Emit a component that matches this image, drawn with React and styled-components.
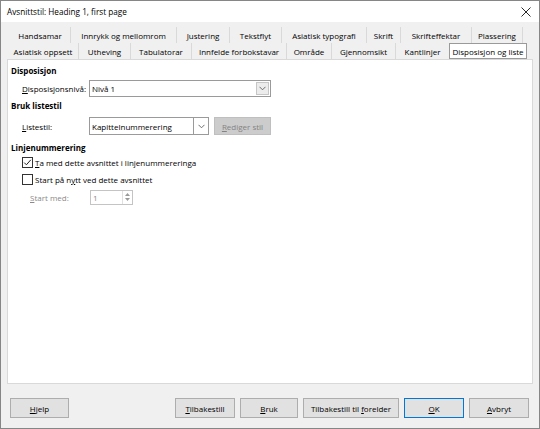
import React from 'react';
import styled, { createGlobalStyle } from 'styled-components';

const Global = createGlobalStyle`
  html, body { margin: 0; padding: 0; background: #ffffff; }
  body { font-family: "Open Sans", "Noto Sans", sans-serif; font-size: 8px; color: #000; }
  * { box-sizing: border-box; }
`;

const Window = styled.div`
  width: 540px;
  height: 429px;
  border: 1px solid #868686;
  background: #f0f0f0;
  display: flex;
  flex-direction: column;
  overflow: hidden;
`;

const TitleBar = styled.div`
  height: 21px;
  background: #ffffff;
  display: flex;
  align-items: center;
  justify-content: space-between;
  padding: 0 8px 0 6px;
  font-size: 8.2px;
`;

const Body = styled.div`
  flex: 1;
  display: flex;
  flex-direction: column;
  padding: 5px 6px 0 6px;
`;

const TabRow = styled.div`
  display: flex;
  height: 16px;
  margin-left: ${p => p.$indent}px;
`;

const Tab = styled.div`
  width: ${p => p.$w}px;
  height: 16px;
  display: flex;
  align-items: center;
  justify-content: center;
  white-space: nowrap;
  background: ${p => (p.$active ? '#ffffff' : 'transparent')};
  border: ${p => (p.$active ? '1px solid #9a9a9a' : 'none')};
  border-right: ${p => (p.$active ? '1px solid #9a9a9a' : p.$sep ? '1px solid #d9d9d9' : 'none')};
`;

const Panel = styled.div`
  height: 325px;
  background: #ffffff;
  border: 1px solid #d9d9d9;
  padding: 5px 3px 0 3px;
  display: flex;
  flex-direction: column;
`;

const Heading = styled.div`
  font-weight: 700;
  height: 12px;
  line-height: 12px;
  margin-top: ${p => p.$mt || 0}px;
`;

const FieldRow = styled.div`
  display: flex;
  align-items: center;
  height: ${p => p.$h}px;
  margin-top: ${p => p.$mt}px;
  margin-left: ${p => p.$ml || 11}px;
`;

const Label = styled.div`
  width: ${p => p.$w}px;
  color: ${p => (p.$disabled ? '#8a8a8a' : '#000')};
  white-space: nowrap;
`;

const U = styled.span`
  text-decoration: underline;
  text-underline-offset: 1px;
`;

const ComboBox = styled.div`
  width: ${p => p.$w}px;
  height: ${p => p.$h}px;
  border: 1px solid #9a9a9a;
  background: #ffffff;
  display: flex;
  align-items: stretch;
`;

const ComboText = styled.div`
  flex: 1;
  display: flex;
  align-items: center;
  padding-left: 2px;
`;

const InnerDrop = styled.div`
  width: 13px;
  margin: 1px;
  background: #ececec;
  border: 1px solid #c6c6c6;
  display: flex;
  align-items: center;
  justify-content: center;
`;

const SplitCombo = styled.div`
  display: flex;
  height: ${p => p.$h}px;
`;

const SplitText = styled.div`
  width: ${p => p.$w}px;
  border: 1px solid #9a9a9a;
  background: #ffffff;
  display: flex;
  align-items: center;
  padding-left: 2px;
`;

const SplitDrop = styled.div`
  width: 15px;
  border: 1px solid #9a9a9a;
  border-left: none;
  background: #ffffff;
  display: flex;
  align-items: center;
  justify-content: center;
`;

const DisabledButton = styled.div`
  width: 57px;
  height: 18px;
  margin-left: 5px;
  background: #cccccc;
  border: 1px solid #bfbfbf;
  color: #838383;
  display: flex;
  align-items: center;
  justify-content: center;
`;

const CheckRow = styled.div`
  display: flex;
  align-items: center;
  height: 12px;
  margin-top: ${p => p.$mt}px;
  margin-left: 11px;
`;

const CheckBox = styled.div`
  width: 11px;
  height: 11px;
  border: 1px solid #333333;
  background: #ffffff;
  display: flex;
  align-items: center;
  justify-content: center;
  margin-right: 2px;
`;

const SpinBox = styled.div`
  width: 43px;
  height: 15px;
  border: 1px solid #c4c4c4;
  background: #ffffff;
  display: flex;
  color: #8a8a8a;
`;

const SpinText = styled.div`
  flex: 1;
  display: flex;
  align-items: center;
  padding-left: 2px;
`;

const SpinArrows = styled.div`
  width: 10px;
  border-left: 1px solid #e0e0e0;
  display: flex;
  flex-direction: column;
  align-items: center;
  justify-content: space-evenly;
`;

const Footer = styled.div`
  display: flex;
  justify-content: space-between;
  margin-top: 14px;
  padding: 0 4px 0 3px;
`;

const ButtonGroup = styled.div`
  display: flex;
  gap: 5px;
`;

const Button = styled.div`
  width: ${p => p.$w}px;
  height: 20px;
  background: #e1e1e1;
  border: 1px solid ${p => (p.$default ? '#0078d7' : '#adadad')};
  display: flex;
  align-items: center;
  justify-content: center;
  white-space: nowrap;
`;

const Chevron = () => (
  <svg width="7" height="5" viewBox="0 0 7 5">
    <polyline points="0.5,0.8 3.5,3.8 6.5,0.8" fill="none" stroke="#606060" strokeWidth="0.9" />
  </svg>
);

const CloseIcon = () => (
  <svg width="10" height="10" viewBox="0 0 10 10">
    <line x1="0.5" y1="0.5" x2="9.5" y2="9.5" stroke="#111" strokeWidth="0.9" />
    <line x1="9.5" y1="0.5" x2="0.5" y2="9.5" stroke="#111" strokeWidth="0.9" />
  </svg>
);

const CheckMark = () => (
  <svg width="9" height="9" viewBox="0 0 9 9">
    <polyline points="1.2,4.6 3.4,6.8 7.8,1.8" fill="none" stroke="#222" strokeWidth="1" />
  </svg>
);

const Triangle = ({ up }) => (
  <svg width="5" height="3" viewBox="0 0 5 3">
    <polygon points={up ? '0,3 2.5,0 5,3' : '0,0 2.5,3 5,0'} fill="#9a9a9a" />
  </svg>
);

const row1 = [
  ['Handsamar', 61],
  ['Innrykk og mellomrom', 106],
  ['Justering', 53],
  ['Tekstflyt', 52],
  ['Asiatisk typografi', 85],
  ['Skrift', 34],
  ['Skrifteffektar', 71],
  ['Plassering', 51],
];

const row2 = [
  ['Asiatisk oppsett', 71],
  ['Utheving', 52],
  ['Tabulatorar', 61],
  ['Innfelde forbokstavar', 95],
  ['Område', 45],
  ['Gjennomsikt', 64],
  ['Kantlinjer', 53],
  ['Disposisjon og liste', 78, true],
];

export default function App() {
  return (
    <>
      <Global />
      <Window>
        <TitleBar>
          <span>Avsnittstil: Heading 1, first page</span>
          <CloseIcon />
        </TitleBar>
        <Body>
          <TabRow $indent={3}>
            {row1.map(([t, w]) => (
              <Tab key={t} $w={w} $sep>
                {t}
              </Tab>
            ))}
          </TabRow>
          <TabRow $indent={1}>
            {row2.map(([t, w, a], i) => (
              <Tab key={t} $w={w} $active={a} $sep={i < row2.length - 2}>
                {t}
              </Tab>
            ))}
          </TabRow>
          <Panel>
            <Heading>Disposisjon</Heading>
            <FieldRow $h={17} $mt={3}>
              <Label $w={67}>
                <U>D</U>isposisjonsnivå:
              </Label>
              <ComboBox $w={182} $h={17}>
                <ComboText>Nivå 1</ComboText>
                <InnerDrop>
                  <Chevron />
                </InnerDrop>
              </ComboBox>
            </FieldRow>
            <Heading $mt={3}>Bruk listestil</Heading>
            <FieldRow $h={18} $mt={5}>
              <Label $w={67}>
                <U>L</U>istestil:
              </Label>
              <SplitCombo $h={18}>
                <SplitText $w={105}>Kapittelnummerering</SplitText>
                <SplitDrop>
                  <Chevron />
                </SplitDrop>
              </SplitCombo>
              <DisabledButton>
                <span>
                  <U>R</U>ediger stil
                </span>
              </DisabledButton>
            </FieldRow>
            <Heading $mt={7}>Linjenummerering</Heading>
            <CheckRow $mt={2}>
              <CheckBox>
                <CheckMark />
              </CheckBox>
              <span>
                <U>T</U>a med dette avsnittet i linjenummereringa
              </span>
            </CheckRow>
            <CheckRow $mt={5}>
              <CheckBox />
              <span>
                Start på n<U>y</U>tt ved dette avsnittet
              </span>
            </CheckRow>
            <FieldRow $h={16} $mt={4} $ml={19}>
              <Label $w={60} $disabled>
                <U>S</U>tart med:
              </Label>
              <SpinBox>
                <SpinText>1</SpinText>
                <SpinArrows>
                  <Triangle up />
                  <Triangle />
                </SpinArrows>
              </SpinBox>
            </FieldRow>
          </Panel>
          <Footer>
            <Button $w={59}>
              <span>
                <U>H</U>jelp
              </span>
            </Button>
            <ButtonGroup>
              <Button $w={60}>
                <span>
                  <U>T</U>ilbakestill
                </span>
              </Button>
              <Button $w={58}>
                <span>
                  <U>B</U>ruk
                </span>
              </Button>
              <Button $w={96}>
                <span>
                  Tilbakestill til <U>f</U>orelder
                </span>
              </Button>
              <Button $w={60} $default>
                <span>
                  <U>O</U>K
                </span>
              </Button>
              <Button $w={60}>
                <span>
                  <U>A</U>vbryt
                </span>
              </Button>
            </ButtonGroup>
          </Footer>
        </Body>
      </Window>
    </>
  );
}
